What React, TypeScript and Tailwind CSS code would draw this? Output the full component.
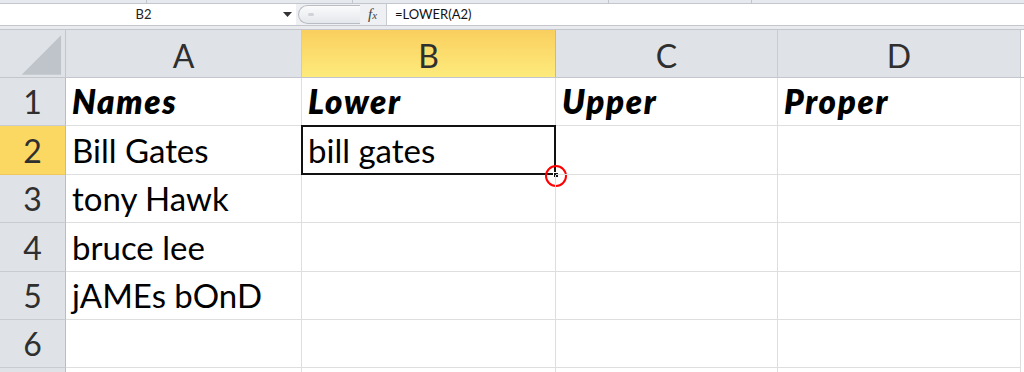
import React from "react";

const cols = [
  { key: "A", w: "w-[236px]" },
  { key: "B", w: "w-[254px]" },
  { key: "C", w: "w-[222px]" },
  { key: "D", w: "w-[243px]" },
];

const rows: { n: string; h: string; cells: string[]; bold?: boolean }[] = [
  { n: "1", h: "h-[48px]", cells: ["Names", "Lower", "Upper", "Proper"], bold: true },
  { n: "2", h: "h-[49px]", cells: ["Bill Gates", "bill gates", "", ""] },
  { n: "3", h: "h-[48px]", cells: ["tony Hawk", "", "", ""] },
  { n: "4", h: "h-[49px]", cells: ["bruce lee", "", "", ""] },
  { n: "5", h: "h-[48px]", cells: ["jAMEs bOnD", "", "", ""] },
  { n: "6", h: "h-[48px]", cells: ["", "", "", ""] },
  { n: "", h: "h-[48px]", cells: ["", "", "", ""] },
];

function FormulaBar() {
  return (
    <div className="h-[30px] flex flex-col bg-[#e3e6ea]">
      <div className="h-[4px] flex border-b border-[#c3c7cd] bg-[#e6e9ed]">
        <div className="w-[147px] border-r border-[#c3c7cd]" />
        <div className="w-[206px] border-r border-[#c3c7cd]" />
        <div className="w-[256px] border-r border-[#c3c7cd]" />
        <div className="w-[143px] border-r border-[#c3c7cd]" />
      </div>
      <div className="h-[21px] flex items-stretch bg-white">
        <div className="w-[296px] flex items-center">
          <span className="flex-1 text-center text-[13px] text-[#222] pl-[4px]">B2</span>
          <svg width="9" height="5" viewBox="0 0 9 5" className="mr-[4px]">
            <path d="M0 0 H9 L4.5 5 Z" fill="#333" />
          </svg>
        </div>
        <div className="w-[90px] flex items-center bg-[#eef0f3]">
          <div className="ml-[2px] w-[62px] h-[19px] rounded-l-full border border-[#b9bdc3] border-r-0 bg-gradient-to-b from-[#fbfbfc] to-[#e4e7eb] flex items-center pl-[9px]">
            <div className="w-[6px] h-[3px] rounded-full bg-[#cfd3d8]" />
          </div>
          <span
            className="ml-[8px] text-[15px] italic text-[#444]"
            style={{ fontFamily: '"Liberation Serif", serif' }}
          >
            f<span className="text-[11px]">x</span>
          </span>
        </div>
        <div className="flex-1 flex items-center border-l border-[#c8ccd1] pl-[8px] text-[13px] text-[#111]">
          =LOWER(A2)
        </div>
      </div>
      <div className="h-[5px] border-t border-b border-[#c3c7cd] bg-[#e9ebee]" />
    </div>
  );
}

function HeaderRow() {
  return (
    <div className="flex h-[48px] border-b border-[#c3c7cd]">
      <div className="w-[66px] shrink-0 border-r border-[#c3c7cd] bg-[#dfe3e8] flex items-center justify-center">
        <svg width="66" height="47" viewBox="0 0 66 47">
          <path d="M62 5 L62 45 L22 45 Z" fill="#bfc4ca" />
        </svg>
      </div>
      {cols.map((c) =>
        c.key === "B" ? (
          <div
            key={c.key}
            className={`${c.w} shrink-0 border-r border-[#f0b640] bg-gradient-to-b from-[#f9cf5e] to-[#fdeb7c] flex items-center justify-center pt-[4px] text-[32px] text-[#2f2f2f]`}
          >
            {c.key}
          </div>
        ) : (
          <div
            key={c.key}
            className={`${c.w} shrink-0 border-r border-[#c8ccd1] bg-[#dfe3e8] flex items-center justify-center pt-[4px] text-[32px] text-[#2f2f2f]`}
          >
            {c.key}
          </div>
        )
      )}
      <div className="flex-1 bg-white" />
    </div>
  );
}

function Row({ r }: { r: (typeof rows)[number] }) {
  const sel = r.n === "2";
  return (
    <div className={`flex ${r.h}`}>
      <div
        className={`w-[66px] shrink-0 border-r border-b flex items-end justify-center pb-[7px] text-[32px] leading-none text-[#2f2f2f] ${
          sel ? "bg-[#fbd862] border-r-[#f0b640] border-b-[#f0c75a]" : "bg-[#dfe3e8] border-r-[#b9bdc3] border-b-[#c8ccd1]"
        }`}
      >
        {r.n}
      </div>
      {cols.map((c, i) => (
        <div
          key={c.key}
          className={`${c.w} shrink-0 relative border-r border-b border-[#dcdee0] flex items-end pl-[6px] pb-[7px] text-[33px] leading-none text-black whitespace-nowrap ${
            r.bold ? "font-extrabold italic tracking-[0.05em]" : ""
          }`}
        >
          <span>{r.cells[i]}</span>
          {sel && c.key === "B" && (
            <>
              <div className="absolute -left-[1px] -top-[1px] -right-[1px] -bottom-[1px] border-2 border-[#111]" />
              <div className="absolute -right-[4px] -bottom-[4px] w-[6px] h-[6px] bg-[#111] border border-white" />
              <div className="absolute -right-[12px] -bottom-[13px] w-[22px] h-[22px] rounded-full border-[2px] border-[#ff0000]" />
            </>
          )}
        </div>
      ))}
      <div className="flex-1 bg-white" />
    </div>
  );
}

export default function App() {
  return (
    <div
      className="w-[1024px] h-[372px] overflow-hidden bg-white"
      style={{ fontFamily: "Lato, 'Open Sans', sans-serif" }}
    >
      <FormulaBar />
      <HeaderRow />
      {rows.map((r, i) => (
        <Row key={i} r={r} />
      ))}
    </div>
  );
}
